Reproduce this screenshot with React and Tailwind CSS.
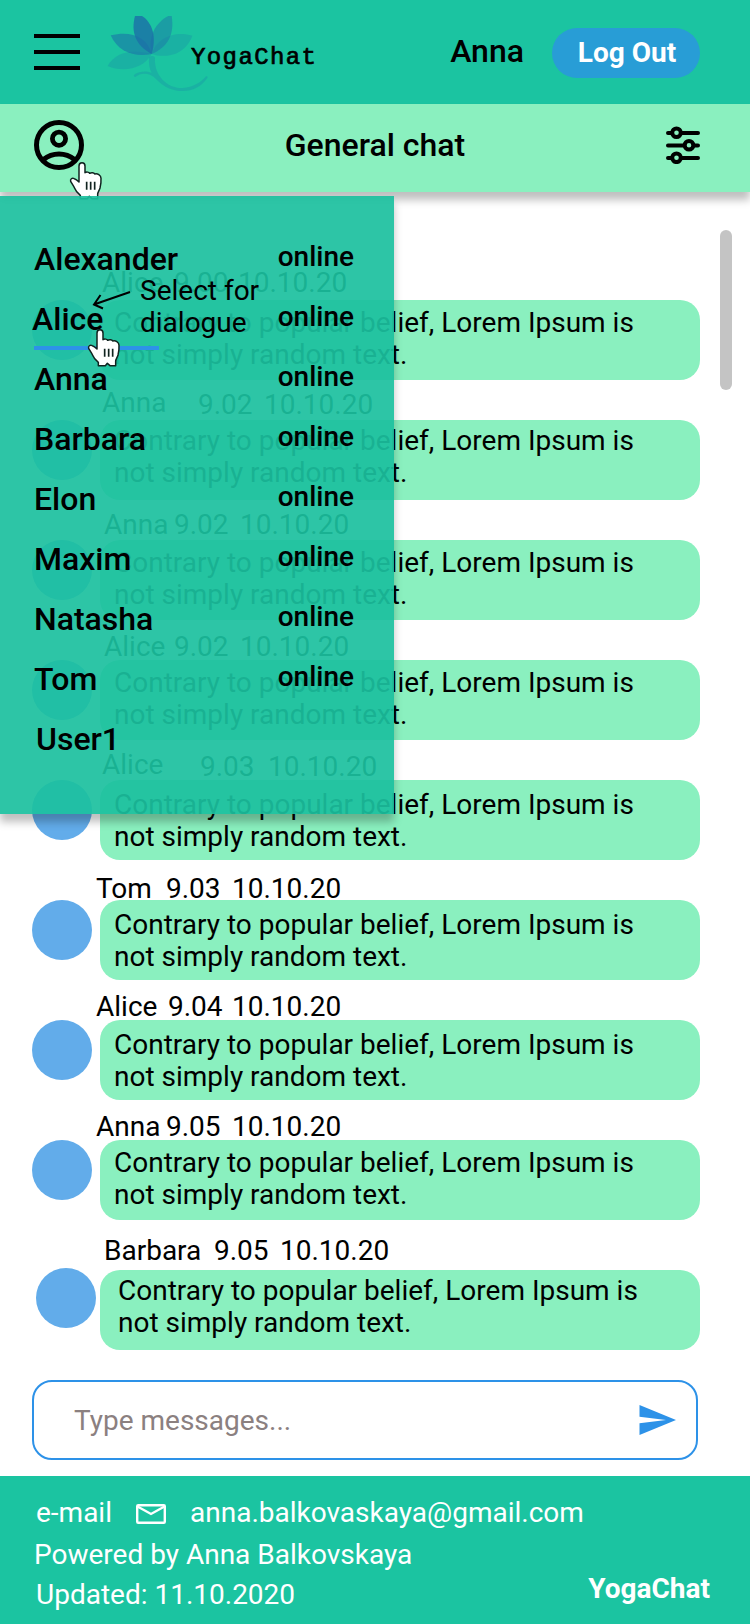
const messages = [
  { name: "Alice", time: "9.00", meta: "pl-[102px] pt-[6px]", nameW: "w-[72px]", timeW: "w-[64px]", shift: "", text: "pt-[7px] pl-[14px]" },
  { name: "Anna", time: "9.02", meta: "pl-[102px] pt-[6px]", nameW: "w-[96px]", timeW: "w-[66px]", shift: "pt-[2px]", text: "pt-[5px] pl-[14px]" },
  { name: "Anna", time: "9.02", meta: "pl-[104px] pt-[8px]", nameW: "w-[70px]", timeW: "w-[66px]", shift: "", text: "pt-[7px] pl-[14px]" },
  { name: "Alice", time: "9.02", meta: "pl-[104px] pt-[10px]", nameW: "w-[70px]", timeW: "w-[66px]", shift: "", text: "pt-[7px] pl-[14px]" },
  { name: "Alice", time: "9.03", meta: "pl-[102px] pt-[8px]", nameW: "w-[98px]", timeW: "w-[68px]", shift: "pt-[2px]", text: "pt-[9px] pl-[14px]" },
  { name: "Tom", time: "9.03", meta: "pl-[96px] pt-[12px]", nameW: "w-[70px]", timeW: "w-[66px]", shift: "", text: "pt-[9px] pl-[14px]" },
  { name: "Alice", time: "9.04", meta: "pl-[96px] pt-[10px]", nameW: "w-[72px]", timeW: "w-[64px]", shift: "", text: "pt-[9px] pl-[14px]" },
  { name: "Anna", time: "9.05", meta: "pl-[96px] pt-[10px]", nameW: "w-[70px]", timeW: "w-[66px]", shift: "", text: "pt-[7px] pl-[14px]" },
  { name: "Barbara", time: "9.05", meta: "pl-[104px] pt-[14px] h-[50px]", nameW: "w-[110px]", timeW: "w-[66px]", shift: "", text: "pt-[5px] pl-[18px]", avatar: "ml-1 -mt-0.5" },
];

const users = [
  { name: "Alexander", pad: "pl-[34px]", online: true },
  { name: "Alice", pad: "pl-[32px]", online: true },
  { name: "Anna", pad: "pl-[34px]", online: true },
  { name: "Barbara", pad: "pl-[34px]", online: true },
  { name: "Elon", pad: "pl-[34px]", online: true },
  { name: "Maxim", pad: "pl-[34px]", online: true },
  { name: "Natasha", pad: "pl-[34px]", online: true },
  { name: "Tom", pad: "pl-[34px]", online: true },
  { name: "User1", pad: "pl-[36px]", online: false },
];

function HandCursor({ className }) {
  return (
    <svg className={className} width="34" height="41" viewBox="0 0 102 123" fill="none">
      <path
        d="M39 8C45 8 48 12 48 18V38C52 35 60 36 62 40C67 37 75 38 77 42C85 39 96 45 96 55C97 66 95 75 93 84C91 92 86 95 86 103V116H69L61 109L55 116H34V106C26 100 20 93 17 85C14 77 9 72 5 64C3 57 9 53 16 56C22 58 26 62 30 66V18C30 12 33 8 39 8Z"
        fill="#fff"
        stroke="#10231f"
        strokeWidth="4.5"
        strokeLinejoin="round"
      />
      <path d="M53 65V89M65 65V89M77 65V89" stroke="#10231f" strokeWidth="5" />
    </svg>
  );
}

function LotusLogo() {
  return (
    <svg width="120" height="100" viewBox="0 0 360 300" fill="none" className="shrink-0">
      <path d="M23 198C44 156 100 145 155 162C132 205 72 219 23 198Z" fill="#1b85a8" fillOpacity=".3" />
      <path d="M277 107C226 92 170 112 155 162C196 176 256 166 277 107Z" fill="#1b85a8" fillOpacity=".3" />
      <path d="M32 106C90 92 142 108 155 162C104 173 54 156 32 106Z" fill="#1b75a8" fillOpacity=".6" />
      <path d="M215 48H205C166 68 142 112 155 162C203 142 224 104 215 48Z" fill="#1b75a8" fillOpacity=".5" />
      <path d="M105 48H126C158 68 170 112 155 162C107 136 92 98 105 48Z" fill="#1b6fa8" fillOpacity=".8" />
      <path
        d="M147 173C149 166 163 166 165 173C161 228 205 266 248 264C280 262 303 247 318 229C322 227 324 231 322 234C304 260 278 273 248 273C216 273 190 260 167 236C150 217 122 217 106 231C101 231 100 227 104 223C120 213 142 212 155 219C148 206 146 190 147 173Z"
        fill="#1b85a8"
        fillOpacity=".3"
      />
    </svg>
  );
}

function Header() {
  return (
    <header className="flex h-[104px] items-start bg-[#1bc4a1] pl-[34px] pr-[50px]">
      <button className="mt-[34px] flex w-[46px] shrink-0 flex-col gap-3" aria-label="Menu">
        <span className="h-1 w-full bg-black" />
        <span className="h-1 w-full bg-black" />
        <span className="h-1 w-full bg-black" />
      </button>
      <div className="ml-5 flex items-start">
        <LotusLogo />
        <span className="-ml-[29px] mt-[44px] font-['Liberation_Mono',monospace] text-[24px] leading-[27px] tracking-[1.4px] [-webkit-text-stroke:0.7px_black]">
          YogaChat
        </span>
      </div>
      <div className="ml-auto flex items-start">
        <span className="mt-8 mr-[28px] text-[32px] font-medium leading-[38px]">Anna</span>
        <button className="mt-7 h-[50px] w-[148px] rounded-full bg-[#289dd6] pl-[2px] text-[28px] font-bold leading-[50px] text-white">
          Log Out
        </button>
      </div>
    </header>
  );
}

function SubHeader() {
  return (
    <div className="relative flex h-[88px] items-start justify-between bg-[#8af0bf] pl-[34px] pr-[50px] shadow-[0_8px_8px_rgba(0,0,0,0.25)]">
      <svg className="mt-4" width="50" height="50" viewBox="0 0 50 50" fill="none" stroke="#000" strokeWidth="5">
        <circle cx="25" cy="25" r="22.500" />
        <circle cx="25" cy="18.700" r="6.600" strokeWidth="4.800" />
        <path d="M9.500 39.500C18.500 32 31.500 32 40.500 39.500" />
      </svg>
      <h1 className="mt-[22px] text-[32px] font-medium leading-[38px]">General chat</h1>
      <svg className="mt-[22px]" width="34" height="38" viewBox="0 0 34 38" fill="none" stroke="#000" strokeWidth="4" strokeLinecap="round">
        <path d="M2 7H5M16 7H32M2 19.500H17M28 19.500H32M2 32H5M16 32H32" />
        <circle cx="10.500" cy="6.800" r="4.300" />
        <circle cx="23" cy="19.300" r="4.300" />
        <circle cx="10.500" cy="31.800" r="4.300" />
      </svg>
      <HandCursor className="absolute left-[69px] top-[56px]" />
    </div>
  );
}

function Message({ name, time, meta, nameW, timeW, shift, text, avatar = "" }) {
  return (
    <article>
      <div className={`flex h-10 items-start whitespace-nowrap leading-[33px] ${meta}`}>
        <span className={`shrink-0 ${nameW}`}>{name}</span>
        <span className={`shrink-0 ${timeW} ${shift}`}>{time}</span>
        <span className={shift}>10.10.20</span>
      </div>
      <div className="flex pl-8">
        <div className="w-[68px] shrink-0">
          <div className={`size-[60px] rounded-full bg-[#62acea] ${avatar}`} />
        </div>
        <p className={`h-20 w-[600px] rounded-[20px] bg-[#8af0bf] leading-8 ${text}`}>
          Contrary to popular belief, Lorem Ipsum is
          <br />
          not simply random text.
        </p>
      </div>
    </article>
  );
}

function UserDrawer() {
  return (
    <aside className="absolute left-0 top-[196px] h-[618px] w-[394px] bg-[#1bc09e]/92 pt-[33px] shadow-[0_8px_8px_rgba(0,0,0,0.25)]">
      <ul>
        {users.map((u) => (
          <li key={u.name} className={`flex h-[60px] items-start justify-between pr-10 font-medium ${u.pad}`}>
            <span className="text-[32px] leading-[60px]">{u.name}</span>
            {u.online && <span className="pt-[1px] leading-[54px]">online</span>}
          </li>
        ))}
      </ul>
      <p className="absolute left-[140px] top-[79px] leading-8">
        Select for
        <br />
        dialogue
      </p>
      <svg className="absolute left-[90px] top-[92px]" width="42" height="24" viewBox="0 0 42 24" fill="none" stroke="#000" strokeWidth="2">
        <path d="M40 4L4 16.500M10.500 7L4 16.500L13 20.500" />
      </svg>
      <div className="absolute left-[34px] top-[150px] h-1 w-[125px] bg-[#2d92e8]" />
      <HandCursor className="absolute left-[87px] top-[131px]" />
    </aside>
  );
}

function Footer() {
  return (
    <footer className="flex h-[148px] items-start justify-between bg-[#1bc4a1] pl-[34px] pr-10 text-white">
      <div className="pt-5">
        <div className="flex h-[42px] items-start pl-[2px] leading-[33px]">
          <span>e-mail</span>
          <svg className="ml-6 mt-2" width="30" height="20" viewBox="0 0 30 20" fill="none" stroke="#fff" strokeWidth="2.400">
            <rect x="1.200" y="1.200" width="27.600" height="17.600" rx="1" />
            <path d="M1.500 2.500L15 10L28.500 2.500" />
          </svg>
          <span className="ml-6">anna.balkovaskaya@gmail.com</span>
        </div>
        <p className="h-10 leading-[33px]">Powered by Anna Balkovskaya</p>
        <p className="pl-[2px] leading-[33px]">Updated: 11.10.2020</p>
      </div>
      <strong className="pt-24 font-bold leading-[33px]">YogaChat</strong>
    </footer>
  );
}

export default function App() {
  return (
    <div className="relative h-[1624px] w-[750px] overflow-hidden bg-white font-['Roboto',sans-serif] text-[28px] text-black">
      <Header />
      <SubHeader />
      <main className="pt-[68px]">
        {messages.map((m, i) => (
          <Message key={i} {...m} />
        ))}
      </main>
      <form className="ml-8 mt-[30px] mb-4 flex h-20 w-[666px] items-center justify-between rounded-[20px] border-2 border-[#2d92e8] pl-10 pr-5">
        <span className="pt-[2px] text-[#8b8080]">Type messages...</span>
        <svg width="37" height="30" viewBox="0 0 37 30" fill="#2d92e8">
          <path d="M0.500 0L37 15L0.500 30V18.300L27 15L0.500 11.700Z" />
        </svg>
      </form>
      <Footer />
      <div className="absolute left-[720px] top-[230px] h-40 w-3 rounded-full bg-[#c4c4c4]" />
      <UserDrawer />
    </div>
  );
}
